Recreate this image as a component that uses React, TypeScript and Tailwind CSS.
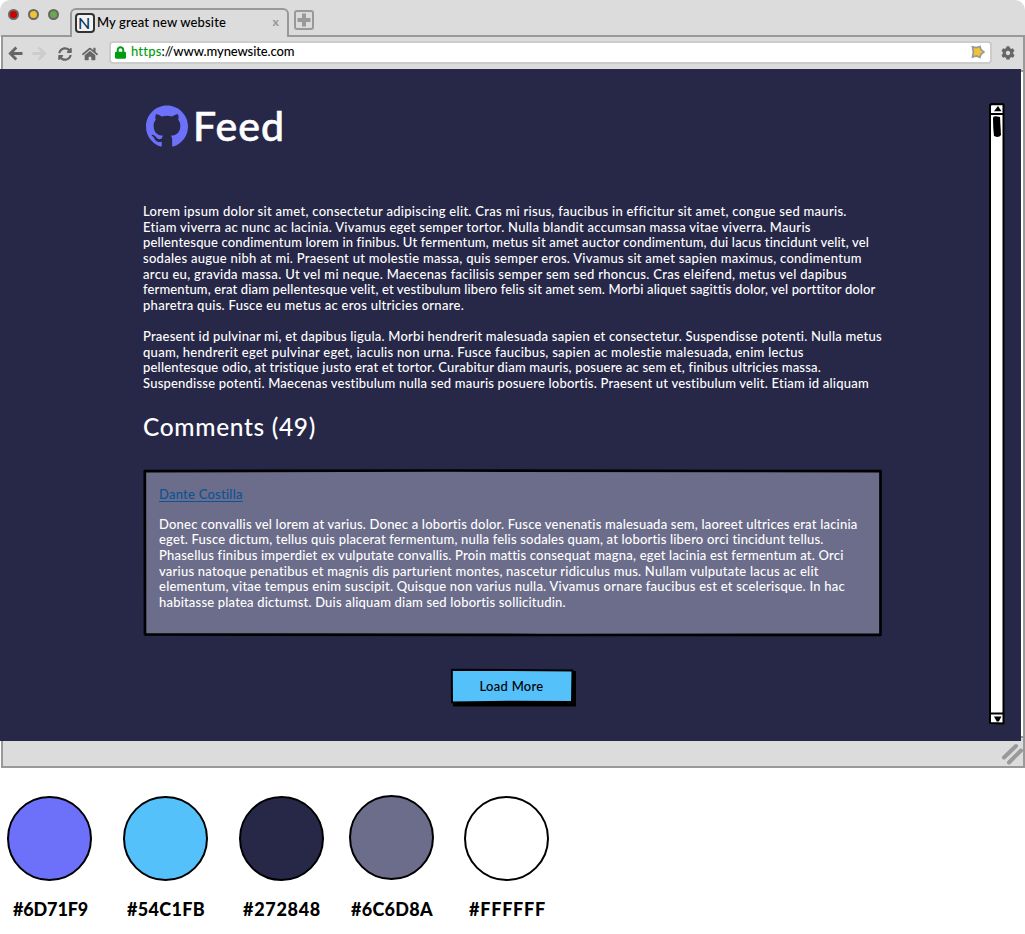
import { useLayoutEffect, useRef } from "react";
import { FaHome, FaLock, FaCog, FaSyncAlt } from "react-icons/fa";

type LineData = [text: string, width: number];

const first: LineData[] = [
  ["Lorem ipsum dolor sit amet, consectetur adipiscing elit. Cras mi risus, faucibus in efficitur sit amet, congue sed mauris.", 703],
  ["Etiam viverra ac nunc ac lacinia. Vivamus eget semper tortor. Nulla blandit accumsan massa vitae viverra. Mauris", 668],
  ["pellentesque condimentum lorem in finibus. Ut fermentum, metus sit amet auctor condimentum, dui lacus tincidunt velit, vel", 726],
  ["sodales augue nibh at mi. Praesent ut molestie massa, quis semper eros. Vivamus sit amet sapien maximus, condimentum", 719],
  ["arcu eu, gravida massa. Ut vel mi neque. Maecenas facilisis semper sem sed rhoncus. Cras eleifend, metus vel dapibus", 704],
  ["fermentum, erat diam pellentesque velit, et vestibulum libero felis sit amet sem. Morbi aliquet sagittis dolor, vel porttitor dolor", 732],
  ["pharetra quis. Fusce eu metus ac eros ultricies ornare.", 321],
];

const second: LineData[] = [
  ["Praesent id pulvinar mi, et dapibus ligula. Morbi hendrerit malesuada sapien et consectetur. Suspendisse potenti. Nulla metus", 739],
  ["quam, hendrerit eget pulvinar eget, iaculis non urna. Fusce faucibus, sapien ac molestie malesuada, enim lectus", 661],
  ["pellentesque odio, at tristique justo erat et tortor. Curabitur diam mauris, posuere ac sem et, finibus ultricies massa.", 678],
  ["Suspendisse potenti. Maecenas vestibulum nulla sed mauris posuere lobortis. Praesent ut vestibulum velit. Etiam id aliquam", 727],
];

const comment: LineData[] = [
  ["Donec convallis vel lorem at varius. Donec a lobortis dolor. Fusce venenatis malesuada sem, laoreet ultrices erat lacinia", 699],
  ["eget. Fusce dictum, tellus quis placerat fermentum, nulla felis sodales quam, at lobortis libero orci tincidunt tellus.", 665],
  ["Phasellus finibus imperdiet ex vulputate convallis. Proin mattis consequat magna, eget lacinia est fermentum at. Orci", 684],
  ["varius natoque penatibus et magnis dis parturient montes, nascetur ridiculus mus. Nullam vulputate lacus ac elit", 660],
  ["elementum, vitae tempus enim suscipit. Quisque non varius nulla. Vivamus ornare faucibus est et scelerisque. In hac", 686],
  ["habitasse platea dictumst. Duis aliquam diam sed lobortis sollicitudin.", 407],
];

const swatches = [
  { hex: "#6D71F9", circle: "bg-[#6d71f9] mt-px", label: "ml-[13px]", width: 75, cell: "w-[116px]" },
  { hex: "#54C1FB", circle: "bg-[#54c1fb] mt-px", label: "ml-[11px]", width: 78, cell: "w-[116px]" },
  { hex: "#272848", circle: "bg-[#272848] mt-px", label: "ml-[11px]", width: 78, cell: "w-[110px]" },
  { hex: "#6C6D8A", circle: "bg-[#6c6d8a]", label: "ml-[9px] pt-px", width: 82, cell: "w-[115px]" },
  { hex: "#FFFFFF", circle: "bg-white mt-px", label: "ml-[12px]", width: 77, cell: "w-[116px]" },
];

/* Text tracked so that its rendered width equals `width`. */
function Fit({ text, width, className = "" }: { text: string; width: number; className?: string }) {
  const ref = useRef<HTMLSpanElement>(null);
  useLayoutEffect(() => {
    const el = ref.current;
    if (!el) return;
    el.style.letterSpacing = "0px";
    const natural = el.getBoundingClientRect().width;
    el.style.letterSpacing = `${(width - natural) / text.length}px`;
  }, [text, width]);
  return (
    <span ref={ref} className={`inline-block whitespace-nowrap ${className}`}>
      {text}
    </span>
  );
}

function Paragraph({ lines }: { lines: LineData[] }) {
  return (
    <p className="text-[13px] leading-[15.65px] text-white">
      {lines.map(([text, width]) => (
        <span key={text} className="block h-[15.65px]">
          <Fit text={text} width={width} />
        </span>
      ))}
    </p>
  );
}

function GithubMark({ className }: { className: string }) {
  return (
    <svg className={className} viewBox="0 0 24 24" fill="currentColor">
      <path d="M12 .297c-6.63 0-12 5.373-12 12 0 5.303 3.438 9.8 8.205 11.385.6.113.82-.258.82-.577 0-.285-.01-1.04-.015-2.04-3.338.724-4.042-1.61-4.042-1.61C4.422 18.07 3.633 17.7 3.633 17.7c-1.087-.744.084-.729.084-.729 1.205.084 1.838 1.236 1.838 1.236 1.07 1.835 2.809 1.305 3.495.998.108-.776.417-1.305.76-1.605-2.665-.3-5.466-1.332-5.466-5.93 0-1.31.465-2.38 1.235-3.22-.135-.303-.54-1.523.105-3.176 0 0 1.005-.322 3.3 1.23.96-.267 1.98-.399 3-.405 1.02.006 2.04.138 3 .405 2.28-1.552 3.285-1.23 3.285-1.23.645 1.653.24 2.873.12 3.176.765.84 1.23 1.91 1.23 3.22 0 4.61-2.805 5.625-5.475 5.92.42.36.81 1.096.81 2.22 0 1.606-.015 2.896-.015 3.286 0 .315.21.69.825.57C20.565 22.092 24 17.592 24 12.297c0-6.627-5.373-12-12-12" />
    </svg>
  );
}

function Arrow({ className }: { className: string }) {
  return (
    <svg className={className} viewBox="0 0 15 15" fill="none" stroke="currentColor" strokeWidth="2.8">
      <path d="M8.3 1.5L2.3 7.5L8.3 13.5M2.5 7.5H14.5" />
    </svg>
  );
}

function TabBar() {
  return (
    <div className="flex h-[37px] shrink-0 items-end rounded-t-[10px] bg-[#dcdcdc]">
      <div className="ml-px h-[37px] w-[69px] border-b-2 border-[#999]">
        <div className="ml-[7px] mt-[9px] flex gap-[9px]">
          <i className="size-[11px] rounded-full border-2 border-[#666] bg-[#cc0000]" />
          <i className="size-[11px] rounded-full border-2 border-[#666] bg-[#f1c232]" />
          <i className="size-[11px] rounded-full border-2 border-[#666] bg-[#6aa84f]" />
        </div>
      </div>
      <div className="flex h-[29px] w-[219px] items-start rounded-t-[6px] border-2 border-b-0 border-[#999] bg-[#dcdcdc] pl-[3px] pt-[3px]">
        <span className="flex size-5 items-center rounded-[4px] border-2 border-[#333] bg-[#f3f3f3] pl-px text-[16px] leading-none text-[#073763]">N</span>
        <span className="ml-[2px] mt-px flex-1 text-[13px] leading-[16px]">
          <Fit text="My great new website" width={129} />
        </span>
        <span className="mr-2 mt-px text-[12px] font-black leading-[15px] text-[#999]">x</span>
      </div>
      <div className="h-[37px] flex-1 border-b-2 border-[#999]">
        <svg className="ml-[5px] mt-[10px]" width="20" height="20" viewBox="0 0 20 20">
          <rect x="1" y="1" width="18" height="18" rx="2" fill="none" stroke="#999" strokeWidth="2" />
          <path d="M10 3.5v13M3.5 10h13" stroke="#999" strokeWidth="4" />
        </svg>
      </div>
    </div>
  );
}

function Toolbar() {
  return (
    <div className="ml-px flex h-8 shrink-0 items-start border-x-2 border-[#999] bg-[#dcdcdc] text-[#666]">
      <Arrow className="ml-[5px] mt-[9px] size-[15px]" />
      <Arrow className="ml-[9px] mt-[9px] size-[15px] rotate-180 text-[#ccc]" />
      <FaSyncAlt className="ml-[11px] mt-[10px] size-[14px]" />
      <FaHome className="ml-[10px] mt-[9px] size-[16px]" />
      <div className="ml-[11px] mt-[4px] flex h-[23px] w-[883px] items-center rounded-[4px] border-2 border-[#ccc] bg-white pl-1 pr-[5px] text-[13px] leading-4">
        <FaLock className="mr-[5px] h-[13px] w-[11px] text-[#009e0f]" />
        <span className="flex-1 pb-[3px] text-black">
          <Fit text="https" width={30} className="text-[#009e0f]" />
          <Fit text="://www.mynewsite.com" width={133} />
        </span>
        <svg width="14" height="14" viewBox="0 0 14 14" className="mb-px">
          <path d="M1.5 1.8L5.3 2.6L9 1.5L9.9 4.6L13 7L9.9 9.3L9 12.3L5.3 11L1.5 12L2.4 7Z" fill="#f1c232" stroke="#999" strokeWidth="1.7" />
        </svg>
      </div>
      <FaCog className="ml-[9px] mt-[9px] size-[14px]" />
    </div>
  );
}

function Scrollbar() {
  return (
    <svg className="absolute left-[988px] top-[33px]" width="18" height="623" viewBox="0 0 18 623">
      <path d="M2 3L4 2L15.5 2.3V621.5L2 621Z" fill="white" stroke="black" strokeWidth="2" strokeLinejoin="round" />
      <path d="M2 12H15M2 611.5H15" stroke="black" strokeWidth="1.8" />
      <path d="M10 4L13.5 9.3H6Z" fill="black" />
      <path d="M6 614.5H13.5L10.8 619.5H8.8Z" fill="black" />
      <path d="M5 16Q5 14 8 14.3L12 15L13 33Q12 35 9 35L6 34Q5 26 5 16Z" fill="black" />
    </svg>
  );
}

function Page() {
  return (
    <div className="flex h-[672px] shrink-0 bg-white">
      <main className="relative h-[672px] w-[1021px] overflow-hidden bg-[#272848] pl-[143px] pt-[36px]">
        <header className="flex h-[42px] items-center">
          <GithubMark className="ml-[3px] size-[42px] text-[#6d71f9]" />
          <h1 className="ml-[5px] text-[41px] leading-[42px] text-white [-webkit-text-stroke:0.6px_white]">
            <Fit text="Feed" width={92} />
          </h1>
        </header>
        <div className="mt-[57px] flex flex-col gap-[15.6px]">
          <Paragraph lines={first} />
          <Paragraph lines={second} />
        </div>
        <h2 className="mt-5 text-[24.5px] leading-[30px] text-white">
          <Fit text="Comments (49)" width={173} />
        </h2>
        <article className="relative mt-[27px] h-[167px] w-[739px] pl-4 pt-[17px]">
          <svg className="absolute left-0 top-0" width="739" height="168" viewBox="0 0 739 168">
            <path d="M1.8 2.2L300 1.5L737.5 2.2V165.8L400 166L2 165.5Z" fill="#6c6d8a" stroke="black" strokeWidth="2.7" strokeLinejoin="round" />
          </svg>
          <div className="relative">
            <a className="block text-[13px] leading-[16px] text-[#0b5394]">
              <Fit text="Dante Costilla" width={84} className="underline underline-offset-2" />
            </a>
            <div className="mt-[15px]">
              <Paragraph lines={comment} />
            </div>
          </div>
        </article>
        <button className="relative ml-[307px] mt-8 block h-[39px] w-[126px]">
          <svg className="absolute left-0 top-0" width="126" height="39" viewBox="0 0 126 39">
            <path d="M3 3H126V38.5H3Z" fill="black" />
            <path d="M1.8 1.8L60 2L122.5 2.5L122 34L60 33.8L2 34.5Z" fill="#54c1fb" stroke="black" strokeWidth="2" strokeLinejoin="round" />
          </svg>
          <span className="relative block pb-[2px] pr-[3px] text-[13px] leading-4">
            <Fit text="Load More" width={64} />
          </span>
        </button>
        <Scrollbar />
      </main>
      <div className="flex w-1 flex-col border-r-2 border-[#999] bg-white">
        <i className="h-[3px] border-b-2 border-[#999] bg-[#dcdcdc]" />
        <i className="flex-1" />
        <i className="h-[5px] border-t-2 border-[#999] bg-[#dcdcdc]" />
      </div>
    </div>
  );
}

export default function App() {
  return (
    <div className="flex h-[934px] w-[1025px] flex-col overflow-hidden bg-white font-['Lato',sans-serif] font-medium text-black">
      <TabBar />
      <Toolbar />
      <Page />
      <footer className="ml-px flex h-[27px] shrink-0 justify-end border-2 border-t-0 border-[#999] bg-[#dcdcdc]">
        <svg width="22" height="25" viewBox="0 0 22 25">
          <path d="M3 16.5L15 5M8 21.5L20 9.5" stroke="#999" strokeWidth="4" strokeLinecap="round" />
        </svg>
      </footer>
      <section className="mt-[27px] flex">
        {swatches.map((s) => (
          <div key={s.hex} className={`shrink-0 ${s.cell}`}>
            <div className={`ml-[7px] size-[85px] rounded-full border-2 border-black ${s.circle}`} />
            <div className={`mt-[17px] text-[18px] font-black leading-[22px] ${s.label}`}>
              <Fit text={s.hex} width={s.width} />
            </div>
          </div>
        ))}
      </section>
    </div>
  );
}
